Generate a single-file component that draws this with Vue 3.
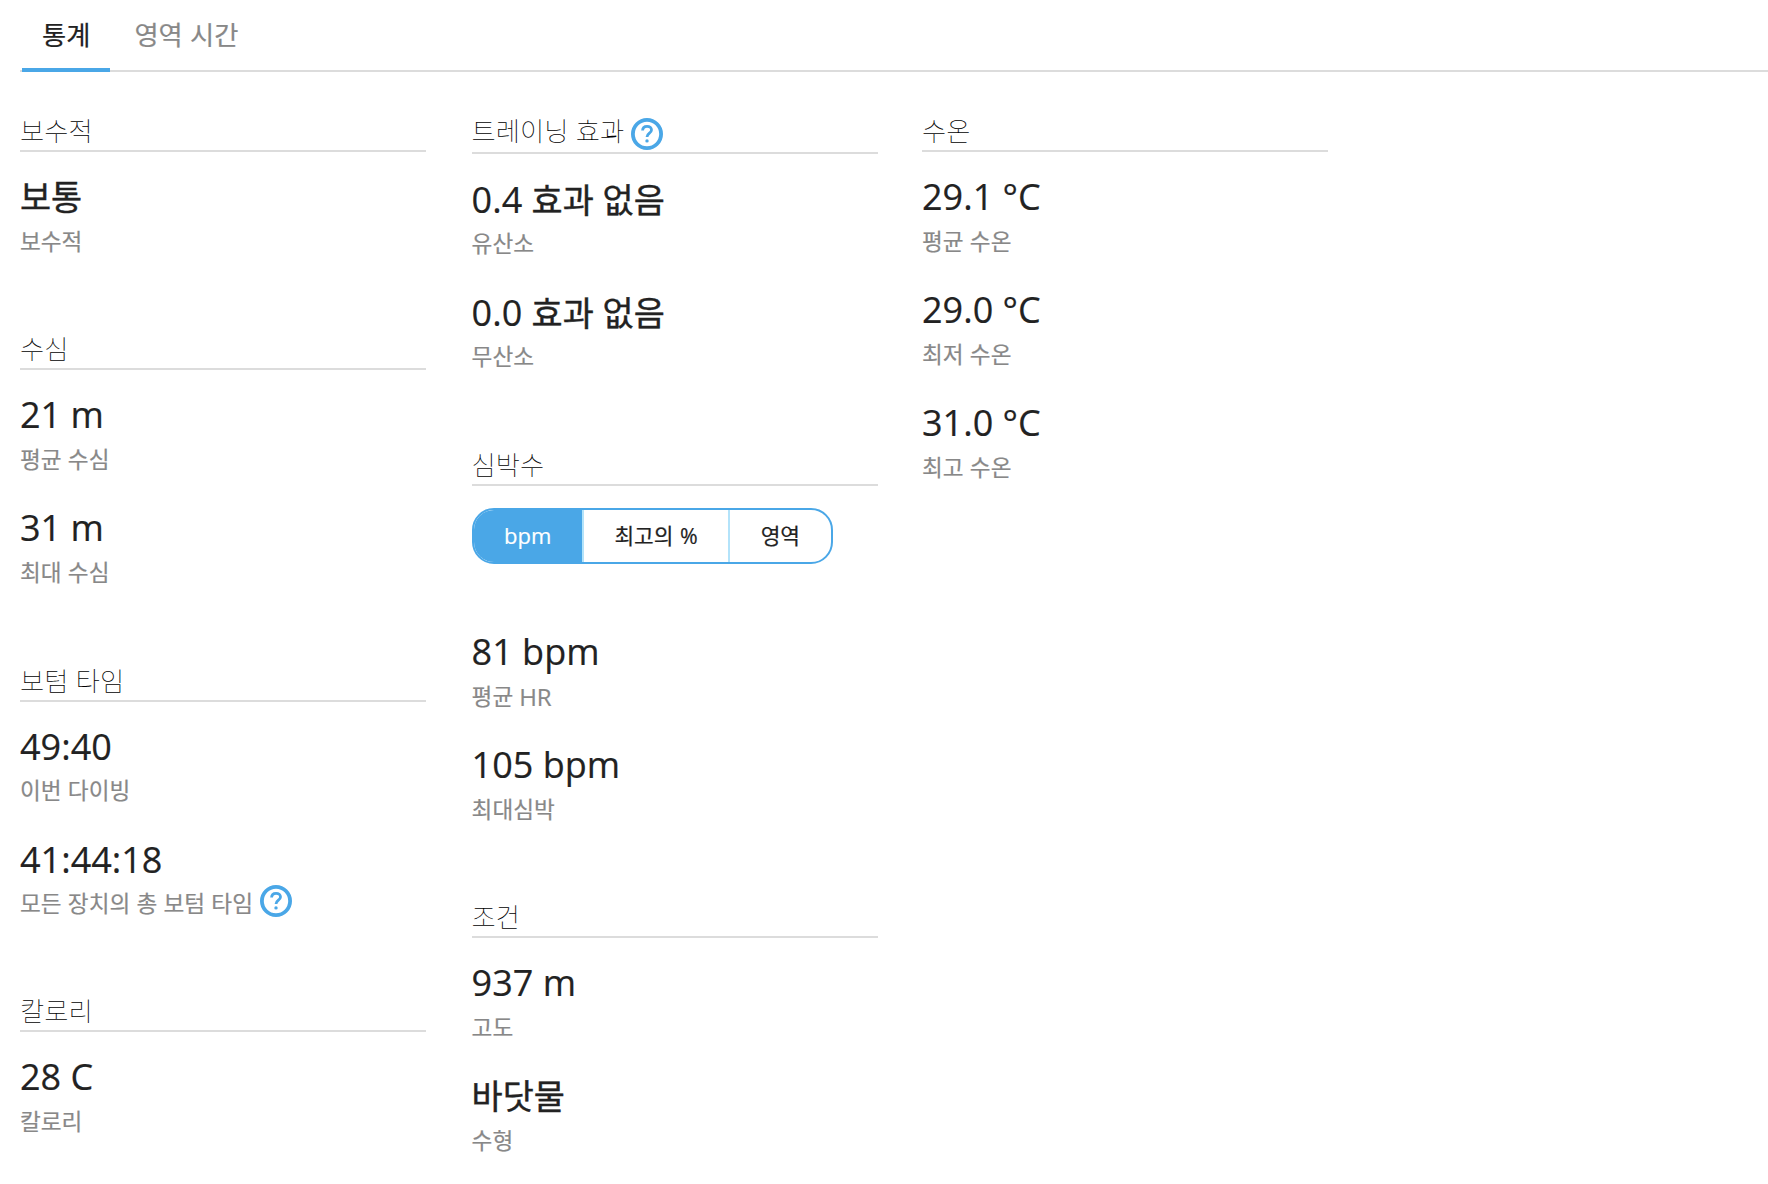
<!--
 Dive activity statistics
-->
<script setup>
import { ref } from 'vue'

const tabs = ['통계', '영역 시간']
const activeTab = ref(0)

const units = ['bpm', '최고의 %', '영역']
const activeUnit = ref(0)

const columns = [
  [
    { title: '보수적', items: [{ text: '보통', label: '보수적' }] },
    {
      title: '수심',
      items: [
        { value: '21 m', label: '평균 수심' },
        { value: '31 m', label: '최대 수심' },
      ],
    },
    {
      title: '보텀 타임',
      items: [
        { value: '49:40', label: '이번 다이빙' },
        { value: '41:44:18', label: '모든 장치의 총 보텀 타임', help: true },
      ],
    },
    { title: '칼로리', items: [{ value: '28 C', label: '칼로리' }] },
  ],
  [
    {
      title: '트레이닝 효과',
      help: true,
      items: [
        { value: '0.4', text: '효과 없음', label: '유산소' },
        { value: '0.0', text: '효과 없음', label: '무산소' },
      ],
    },
    {
      title: '심박수',
      toggle: true,
      items: [
        { value: '81 bpm', label: '평균', suffix: 'HR' },
        { value: '105 bpm', label: '최대심박' },
      ],
    },
    {
      title: '조건',
      items: [
        { value: '937 m', label: '고도' },
        { text: '바닷물', label: '수형' },
      ],
    },
  ],
  [
    {
      title: '수온',
      items: [
        { value: '29.1 °C', label: '평균 수온' },
        { value: '29.0 °C', label: '최저 수온' },
        { value: '31.0 °C', label: '최고 수온' },
      ],
    },
  ],
]
</script>

<template>
  <div class="stats-page">
    <nav class="tabs">
      <button
        v-for="(tab, i) in tabs"
        :key="tab"
        class="tab"
        :class="{ active: activeTab === i }"
        @click="activeTab = i"
      >{{ tab }}</button>
    </nav>

    <div class="columns">
      <div v-for="(column, c) in columns" :key="c" class="column">
        <section v-for="section in column" :key="section.title" class="section">
          <h3 class="title" :class="{ 'has-help': section.help }">
            <span class="title-text">{{ section.title }}</span>
            <svg v-if="section.help" class="help" viewBox="0 0 32 32">
              <circle class="ring" cx="16" cy="16" r="14.1" />
              <path class="mark" d="M11.6 12.6C11.6 9.9 13.5 8.3 16.1 8.3C18.7 8.3 20.5 9.9 20.5 12.1C20.5 15.2 16 15.3 16 19" />
              <circle class="dot" cx="16" cy="22.9" r="1.7" />
            </svg>
          </h3>

          <div v-if="section.toggle" class="toggle">
            <button
              v-for="(unit, i) in units"
              :key="unit"
              class="unit"
              :class="{ active: activeUnit === i }"
              @click="activeUnit = i"
            >{{ unit }}</button>
          </div>

          <div v-for="item in section.items" :key="item.label" class="item">
            <div class="value">
              <span v-if="item.value" class="number">{{ item.value }}</span>
              <span v-if="item.text" class="korean">{{ item.text }}</span>
            </div>
            <div class="label">
              <span class="label-text">{{ item.label }}</span>
              <span v-if="item.suffix" class="suffix">{{ item.suffix }}</span>
              <svg v-if="item.help" class="help" viewBox="0 0 32 32">
                <circle class="ring" cx="16" cy="16" r="14.1" />
                <path class="mark" d="M11.6 12.6C11.6 9.9 13.5 8.3 16.1 8.3C18.7 8.3 20.5 9.9 20.5 12.1C20.5 15.2 16 15.3 16 19" />
                <circle class="dot" cx="16" cy="22.9" r="1.7" />
              </svg>
            </div>
          </div>
        </section>
      </div>
    </div>
  </div>
</template>

<style>
body {
  margin: 0;
  background-color: #ffffff;
}
</style>

<style scoped>
.stats-page {
  height: 1184px;
  overflow: hidden;
  color: #222222;
  font-family: "Open Sans", "Noto Sans CJK KR", sans-serif;
}
button {
  border: none;
  background: none;
  padding: 0;
  color: inherit;
  font-family: inherit;
}

/* tab bar */
.tabs {
  display: flex;
  gap: 4px;
  height: 70px;
  margin-left: 20px;
  padding-left: 2px;
  border-bottom: 2px solid #dcdcdc;
}
.tab {
  box-sizing: border-box;
  height: 72px;
  padding: 0 20px 1px;
  border-bottom: 4px solid transparent;
  color: #888888;
  font-size: 26.3px;
  word-spacing: 0.5px;
  -webkit-text-stroke: 0.2px;
}
.tab.active {
  border-bottom-color: #4aa7e7;
  color: #222222;
}

/* stat columns */
.columns {
  display: flex;
  gap: 45px;
  padding: 38px 0 0 20px;
}
.column {
  width: 406px;
}
.column:nth-child(2) {
  margin: 0 -0.6px 0 0.6px;
}
.section {
  display: flex;
  flex-direction: column;
  margin-bottom: 42.3px;
}
.section:nth-child(3) {
  margin-bottom: 41.5px;
}
.title {
  display: flex;
  height: 40px;
  margin: 0 0 21px;
  border-bottom: 2px solid #dcdcdc;
  color: #000000;
  font-size: 26.3px;
  font-weight: 100;
  line-height: 42px;
  word-spacing: 0.5px;
}
.title.has-help {
  height: 42px;
  margin-bottom: 21.5px;
}
.title .help {
  margin: 8px 0 0 7px;
}
.item {
  height: 87px;
  margin-bottom: 26px;
}
.value {
  display: flex;
  height: 48px;
  font-size: 36px;
  line-height: 48px;
  -webkit-text-stroke: 0.2px;
}
.korean {
  font-size: 33.8px;
  -webkit-text-stroke: 0.4px;
}
.number + .korean {
  margin-left: 9.4px;
}
.label {
  display: flex;
  height: 36px;
  margin-top: 2.8px;
  color: #888888;
  font-size: 22.6px;
  line-height: 36px;
  word-spacing: 0.4px;
  -webkit-text-stroke: 0.2px;
}
.suffix {
  margin-left: 6px;
  font-size: 24px;
}
.label .help {
  margin: -1px 0 0 7px;
}

/* heart rate unit switch */
.toggle {
  display: flex;
  align-self: flex-start;
  box-sizing: border-box;
  height: 56px;
  margin: 1px 0 64.4px;
  overflow: hidden;
  border: 2px solid #4aa7e7;
  border-radius: 22px;
}
.unit {
  padding: 0 30.5px 2px;
  border-right: 2px solid #b3e3fa;
  font-size: 21.4px;
  word-spacing: 1px;
  -webkit-text-stroke: 0.2px;
}
.unit:last-child {
  border-right: none;
}
.unit.active {
  background-color: #4aa7e7;
  color: #ffffff;
  font-size: 22px;
}

/* help icon */
.help {
  width: 32px;
  height: 32px;
}
.ring {
  fill: none;
  stroke: #4aa7e7;
  stroke-width: 3.8;
}
.mark {
  fill: none;
  stroke: #4aa7e7;
  stroke-width: 2.8;
}
.dot {
  fill: #4aa7e7;
}
</style>
